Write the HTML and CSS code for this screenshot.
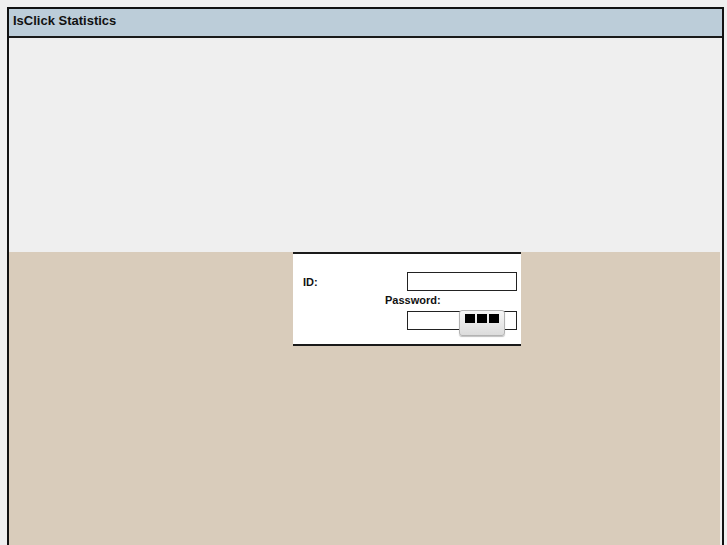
FILE: index.html
```html
<!DOCTYPE html>
<html lang="en">
<head>
<meta charset="utf-8">
<title>IsClick Statistics</title>
<link rel="stylesheet" href="styles.css">
</head>
<body>
<div class="frame">
  <header class="titlebar">IsClick Statistics</header>
  <div class="upper"></div>
  <div class="lower">
    <form class="login">
      <div class="row">
        <label class="lbl" for="uid">ID:</label>
        <input class="field" id="uid" type="text">
      </div>
      <div class="row pw-label">
        <label class="lbl" for="pwd">Password:</label>
      </div>
      <div class="row">
        <input class="field" id="pwd" type="password">
      </div>
      <button class="go" type="button"><span></span><span></span><span></span></button>
    </form>
  </div>
</div>
</body>
</html>
```
FILE: styles.css
```css
html, body {
  margin: 0;
  height: 100%;
  overflow: hidden;
}

body {
  background: #efefef;
  font-family: "Liberation Sans", Arial, sans-serif;
}

.frame {
  margin: 7px 3px 0 7px;
  border: 2px solid #111;
  border-bottom: 0;
  height: calc(100vh - 7px);
  box-sizing: border-box;
  display: flex;
  flex-direction: column;
}

.titlebar {
  height: 27px;
  background: #bccdd9;
  border-bottom: 2px solid #1a1a1a;
  padding-left: 4px;
  font-size: 13px;
  font-weight: bold;
  line-height: 23px;
  color: #111;
}

.upper {
  height: 214px;
  background: #efefef;
}

.lower {
  flex: 1;
  background: #d9ccbb;
  border-right: 2px solid #efefef;
  padding-left: 284px;
}

.login {
  position: relative;
  width: 228px;
  box-sizing: border-box;
  margin: 0;
  background: #fff;
  border-top: 2px solid #1a1a1a;
  border-bottom: 2px solid #1a1a1a;
  padding: 18px 4px 14px 10px;
}

.row {
  display: flex;
  align-items: center;
  height: 19px;
}

.row .field {
  margin-left: auto;
}

.pw-label {
  height: 16px;
  margin: 1px 0 3px;
  padding-left: 82px;
}

.lbl {
  font-size: 11px;
  font-weight: bold;
  color: #111;
}

.field {
  box-sizing: border-box;
  width: 110px;
  height: 19px;
  margin: 0;
  padding: 0 2px;
  border: 1px solid #222;
  background: #fff;
  font-size: 11px;
}

.go {
  position: absolute;
  left: 166px;
  top: 56px;
  width: 46px;
  height: 26px;
  margin: 0;
  padding: 3px 0 0;
  border: 1px solid #b3b3b3;
  border-radius: 3px;
  background: linear-gradient(#f7f7f7, #dcdcdc);
  box-shadow: 0 1px 1px rgba(0, 0, 0, 0.25);
  display: flex;
  justify-content: center;
  align-items: flex-start;
  gap: 2px;
  box-sizing: border-box;
}

.go span {
  width: 10px;
  height: 9px;
  background: #000;
}
```
